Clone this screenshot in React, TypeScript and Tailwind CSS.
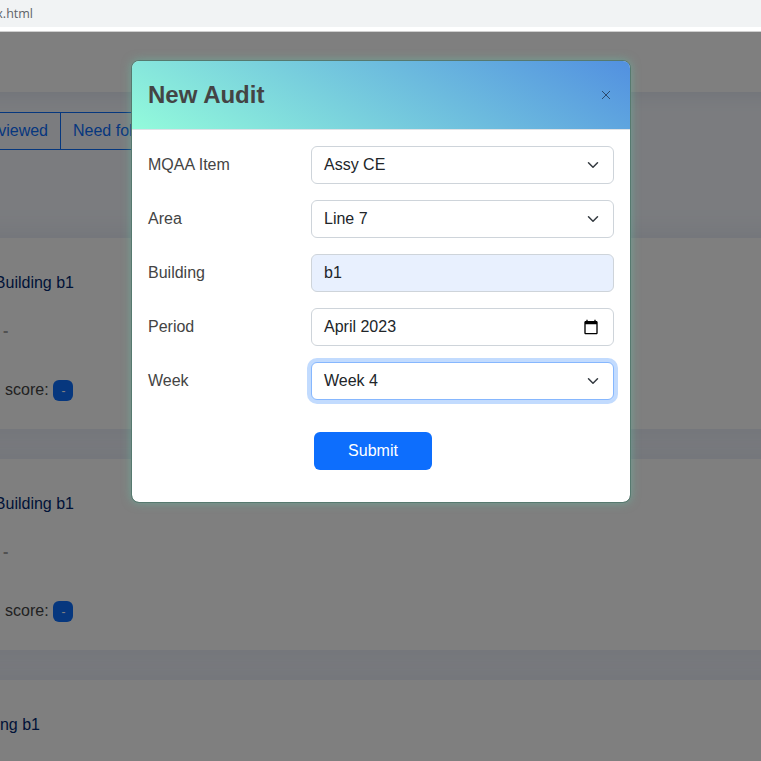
import type { ReactNode } from "react";

function ChevronDown() {
  return (
    <svg viewBox="0 0 16 16" className="h-3 w-4 shrink-0" fill="none" stroke="#343a40" strokeWidth="2" strokeLinecap="round" strokeLinejoin="round">
      <path d="m2 5 6 6 6-6" />
    </svg>
  );
}

function CalendarIcon() {
  return (
    <svg viewBox="0 0 24 24" className="h-4 w-4 shrink-0" fill="#000">
      <path d="M20 3h-1V1h-2v2H7V1H5v2H4c-1.1 0-2 .9-2 2v16c0 1.1.9 2 2 2h16c1.1 0 2-.9 2-2V5c0-1.1-.9-2-2-2zm0 18H4V8h16v13z" />
    </svg>
  );
}

const border = "border-[#ced4da]";

function Row({ label, value, icon, tone = `${border} bg-white` }: { label: string; value: string; icon?: ReactNode; tone?: string }) {
  return (
    <div className="flex h-[38px] items-center">
      <div className="w-[163px] pb-px text-[#444444]">{label}</div>
      <div className={`flex h-full flex-1 items-center justify-between rounded-md border px-3 text-[#212529] ${tone}`}>
        <span className="pb-px">{value}</span>
        {icon}
      </div>
    </div>
  );
}

function Card({ title, titleWidth }: { title: string; titleWidth: string }) {
  return (
    <div className="h-[191px] shrink-0 bg-white px-10 pt-[33px] shadow-[0_0_30px_rgba(1,41,112,0.1)]">
      <div className={`flex justify-end whitespace-nowrap text-[#012970] ${titleWidth}`}>{title}</div>
      <div className="mt-6 pl-[3px] font-bold text-[#a2a2a2]">-</div>
      <div className="mt-[35px] flex items-start pl-[5px] text-[#444444]">
        <span className="w-12">score:</span>
        <span className="mt-[2px] flex h-[21px] w-5 items-center justify-center rounded-md bg-[#0d6efd] pt-px pl-px text-xs text-white">-</span>
      </div>
    </div>
  );
}

export default function App() {
  return (
    <div className="flex h-[761px] w-[761px] flex-col overflow-hidden bg-white font-['Liberation_Sans',Arial,sans-serif] text-base leading-6">
      <div className="flex h-[27px] shrink-0 items-center overflow-hidden bg-[#f1f3f4] font-['Open_Sans',sans-serif] text-[12.5px] text-[#5f6368]">
        <div className="flex w-[33px] justify-end whitespace-nowrap">x.html</div>
      </div>
      <div className="h-[5px] shrink-0 border-b border-[#cfcfcf] bg-white" />
      <div className="relative flex h-[729px] flex-col overflow-hidden bg-[#f6f9ff]">
        <div className="-mx-10 h-[60px] shrink-0 bg-white shadow-[0_2px_20px_rgba(1,41,112,0.1)]" />
        <div className="mt-5 flex h-[38px] shrink-0 text-[#0d6efd]">
          <div className="flex w-[61px] items-center justify-end whitespace-nowrap border-y border-r border-[#0d6efd] pr-3 pb-px">Reviewed</div>
          <div className="flex items-center whitespace-nowrap border-y border-r border-[#0d6efd] px-3 pb-px">Need follow up</div>
        </div>
        <div className="-mx-10 mt-[88px] flex flex-col gap-[30px]">
          <Card title="Building b1" titleWidth="w-[74px]" />
          <Card title="Building b1" titleWidth="w-[74px]" />
          <Card title="Building b1" titleWidth="w-10" />
        </div>

        <div className="absolute inset-0 flex items-start bg-black/50 pl-[131px] pt-7">
          <div className="h-[443px] w-[500px] rounded-lg border border-[#56796f] bg-white bg-clip-padding shadow-[0_0_10px_rgba(100,200,170,0.5)]">
            <div className="flex h-[69px] items-center justify-between rounded-t-[7px] border-b border-[#dee2e6] bg-[linear-gradient(30deg,#93fbdb,#5290e0)] px-4">
              <h1 className="text-2xl font-bold text-[#444444]">New Audit</h1>
              <svg viewBox="0 0 10 10" className="mr-[3px] h-[10px] w-[10px]" fill="none" stroke="#2b4b70" strokeWidth="1">
                <path d="m1 1 8 8M9 1 1 9" />
              </svg>
            </div>
            <div className="flex flex-col gap-4 p-4">
              <Row label="MQAA Item" value="Assy CE" icon={<ChevronDown />} />
              <Row label="Area" value="Line 7" icon={<ChevronDown />} />
              <Row label="Building" value="b1" tone="border-[#ced4da] bg-[#e8f0fe]" />
              <Row label="Period" value="April 2023" icon={<div className="mr-0.5 pb-px"><CalendarIcon /></div>} />
              <Row label="Week" value="Week 4" icon={<ChevronDown />} tone="border-[#86b7fe] bg-white shadow-[0_0_0_4px_rgba(13,110,253,0.25)]" />
              <button className="ml-[166px] mt-4 flex h-[38px] w-[118px] items-center justify-center rounded-md bg-[#0d6efd] pb-px text-white">Submit</button>
            </div>
          </div>
        </div>
      </div>
    </div>
  );
}
